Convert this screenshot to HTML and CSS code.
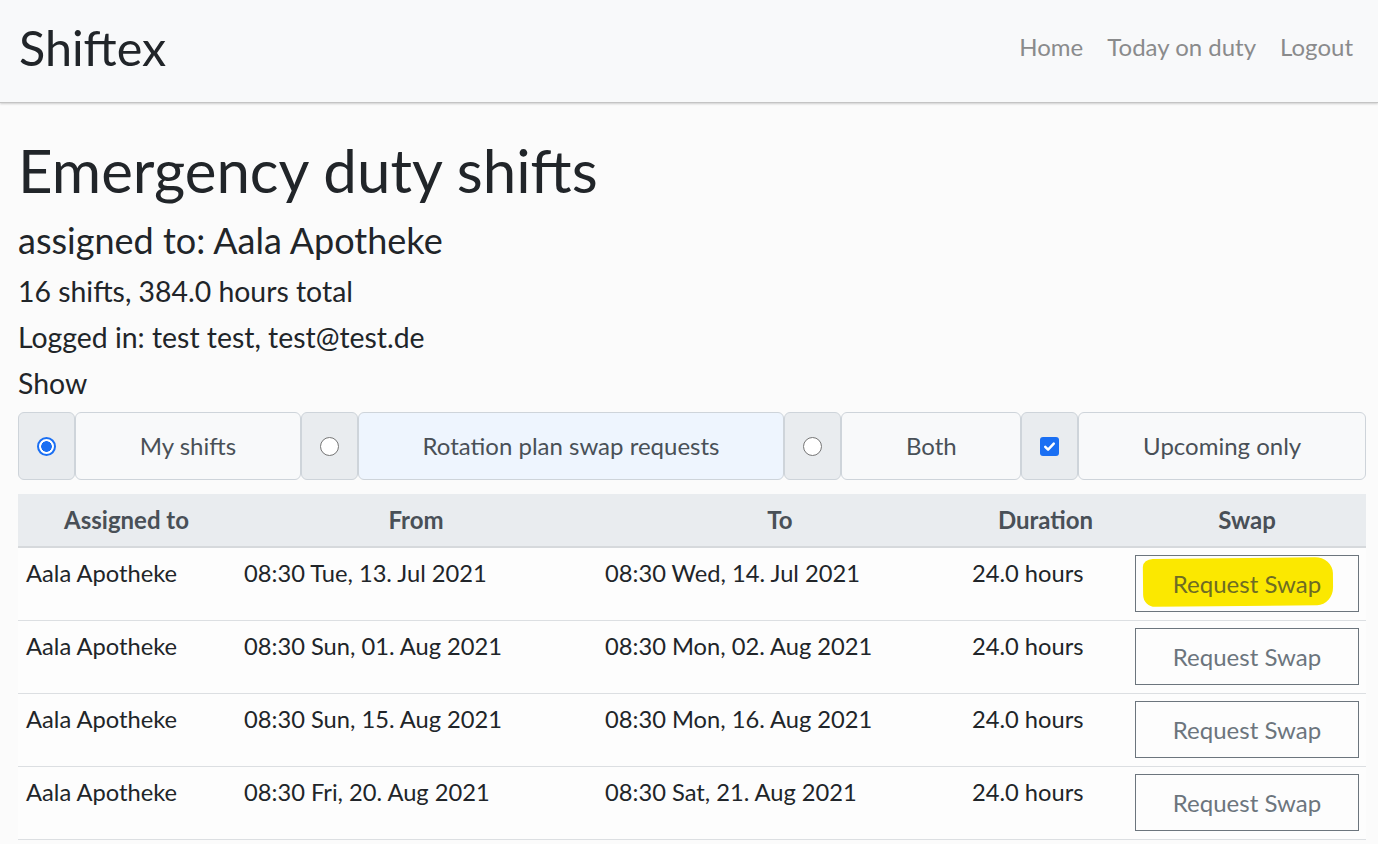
FILE: index.html
```html
<!DOCTYPE html>
<html lang="en">
<head>
<meta charset="utf-8">
<title>Shiftex</title>
<link rel="stylesheet" href="styles.css">
</head>
<body>
<nav class="navbar">
  <a class="brand" href="#">Shiftex</a>
  <ul class="nav-links">
    <li><a href="#">Home</a></li>
    <li><a href="#">Today on duty</a></li>
    <li><a href="#">Logout</a></li>
  </ul>
</nav>
<main class="container">
  <h1 class="title">Emergency duty shifts</h1>
  <h2 class="subtitle">assigned to: Aala Apotheke</h2>
  <p class="info">16 shifts, 384.0 hours total</p>
  <p class="info">Logged in: test test, test@test.de</p>
  <p class="info show">Show</p>

  <div class="filter-group">
    <span class="addon"><span class="radio checked"></span></span>
    <span class="option">My shifts</span>
    <span class="addon"><span class="radio"></span></span>
    <span class="option hovered">Rotation plan swap requests</span>
    <span class="addon"><span class="radio"></span></span>
    <span class="option">Both</span>
    <span class="addon">
      <span class="checkbox">
        <svg viewBox="0 0 20 20" width="19" height="19"><path d="M5.5 10.3l3 3 6-6.4" fill="none" stroke="#fff" stroke-width="2.6" stroke-linecap="round" stroke-linejoin="round"/></svg>
      </span>
    </span>
    <span class="option">Upcoming only</span>
  </div>

  <table class="shifts">
    <colgroup>
      <col class="c-assigned">
      <col class="c-from">
      <col class="c-to">
      <col class="c-duration">
      <col class="c-swap">
    </colgroup>
    <thead>
      <tr><th>Assigned to</th><th>From</th><th>To</th><th>Duration</th><th>Swap</th></tr>
    </thead>
    <tbody>
      <tr>
        <td>Aala Apotheke</td>
        <td>08:30 Tue, 13. Jul 2021</td>
        <td>08:30 Wed, 14. Jul 2021</td>
        <td>24.0 hours</td>
        <td><button class="btn-swap marked"><span class="marker"></span><span class="btn-text">Request Swap</span></button></td>
      </tr>
      <tr>
        <td>Aala Apotheke</td>
        <td>08:30 Sun, 01. Aug 2021</td>
        <td>08:30 Mon, 02. Aug 2021</td>
        <td>24.0 hours</td>
        <td><button class="btn-swap"><span class="btn-text">Request Swap</span></button></td>
      </tr>
      <tr>
        <td>Aala Apotheke</td>
        <td>08:30 Sun, 15. Aug 2021</td>
        <td>08:30 Mon, 16. Aug 2021</td>
        <td>24.0 hours</td>
        <td><button class="btn-swap"><span class="btn-text">Request Swap</span></button></td>
      </tr>
      <tr>
        <td>Aala Apotheke</td>
        <td>08:30 Fri, 20. Aug 2021</td>
        <td>08:30 Sat, 21. Aug 2021</td>
        <td>24.0 hours</td>
        <td><button class="btn-swap"><span class="btn-text">Request Swap</span></button></td>
      </tr>
    </tbody>
  </table>
</main>
</body>
</html>
```
FILE: styles.css
```css
* { box-sizing: border-box; }

html, body {
  margin: 0;
  padding: 0;
}

body {
  font-family: Lato, "Open Sans", "Liberation Sans", sans-serif;
  font-size: 24px;
  line-height: 1.5;
  color: #212529;
  background: #fbfbfb;
  overflow: hidden;
}

/* Navbar */
.navbar {
  height: 103px;
  background: #f8f9fa;
  display: flex;
  align-items: center;
  justify-content: space-between;
  padding: 0 13px 0 19px;
  border-bottom: 1px solid #c4c4c4;
  box-shadow: 0 1px 2px rgba(0, 0, 0, 0.18);
}

.brand {
  font-size: 48.5px;
  line-height: 1.2;
  color: #212529;
  text-decoration: none;
  margin-top: -7px;
}

.nav-links {
  list-style: none;
  display: flex;
  margin: 0;
  padding: 0;
  margin-top: -8px;
}

.nav-links a {
  display: block;
  padding: 0 12px;
  color: #8a8b8c;
  text-decoration: none;
  font-size: 24px;
}

/* Main */
.container {
  padding: 31px 12px 0 18px;
}

.title {
  font-size: 60px;
  font-weight: 400;
  line-height: 1.2;
  margin: 0 0 12.5px;
}

.subtitle {
  font-size: 36px;
  font-weight: 400;
  line-height: 1.2;
  margin: 0 0 8px;
}

.info {
  font-size: 28.4px;
  line-height: 1.5;
  margin: 0 0 3.5px;
}

.show {
  margin-bottom: 7.5px;
}

/* Filter button group */
.filter-group {
  display: flex;
  height: 68px;
  margin-bottom: 14px;
}

.addon {
  width: 57px;
  flex: 0 0 57px;
  display: flex;
  align-items: center;
  justify-content: center;
  background: #e9ecef;
  border: 1px solid #ced4da;
  border-radius: 6px;
}

.option {
  flex: 1 1 auto;
  display: flex;
  align-items: center;
  justify-content: center;
  padding: 0 20px;
  background: #f8f9fa;
  border: 1px solid #ced4da;
  border-radius: 6px;
  color: #495057;
  white-space: nowrap;
}

.option.hovered {
  background: #eef5fe;
}

.radio {
  width: 19px;
  height: 19px;
  border-radius: 50%;
  border: 1.5px solid #767676;
  background: #fff;
  display: block;
}

.radio.checked {
  border: 2px solid #1a6ff3;
  background: radial-gradient(circle, #1a6ff3 0 5px, #fff 5.6px);
}

.checkbox {
  width: 19px;
  height: 19px;
  border-radius: 3px;
  background: #1a6ff3;
  display: block;
}

.checkbox svg {
  display: block;
}

/* Table */
.shifts {
  width: 100%;
  table-layout: fixed;
  border-collapse: collapse;
}

.c-assigned { width: 217px; }
.c-from { width: 362px; }
.c-to { width: 366px; }
.c-duration { width: 165px; }
.c-swap { width: 238px; }

.shifts th {
  background: #e9ecef;
  color: #495057;
  font-weight: 700;
  text-align: center;
  padding: 8px;
  line-height: 36px;
  border-bottom: 2px solid #d6d9dc;
}

.shifts td {
  padding: 7px 8px 8px 8px;
  vertical-align: top;
  line-height: 36px;
  font-size: 23.7px;
  white-space: nowrap;
  border-bottom: 1px solid #dcdfe2;
  background: #fdfdfd;
}

.shifts td:nth-child(2),
.shifts td:nth-child(4) { padding-left: 9px; }

.btn-swap {
  position: relative;
  display: block;
  width: 224px;
  height: 57px;
  margin-left: -1px;
  font-family: inherit;
  font-size: 24px;
  line-height: 36px;
  color: #6c757d;
  background: transparent;
  border: 1px solid #6c757d;
  border-radius: 0;
  padding: 9px 18px;
  text-align: center;
}

.btn-text {
  position: relative;
}

.btn-swap.marked .btn-text {
  color: #6e6c24;
}

.marker {
  position: absolute;
  left: 7px;
  top: 2px;
  width: 190px;
  height: 48px;
  background: #fbe800;
  border-radius: 10px 18px 16px 12px / 8px 16px 18px 12px;
  transform: rotate(-0.6deg);
}
```
